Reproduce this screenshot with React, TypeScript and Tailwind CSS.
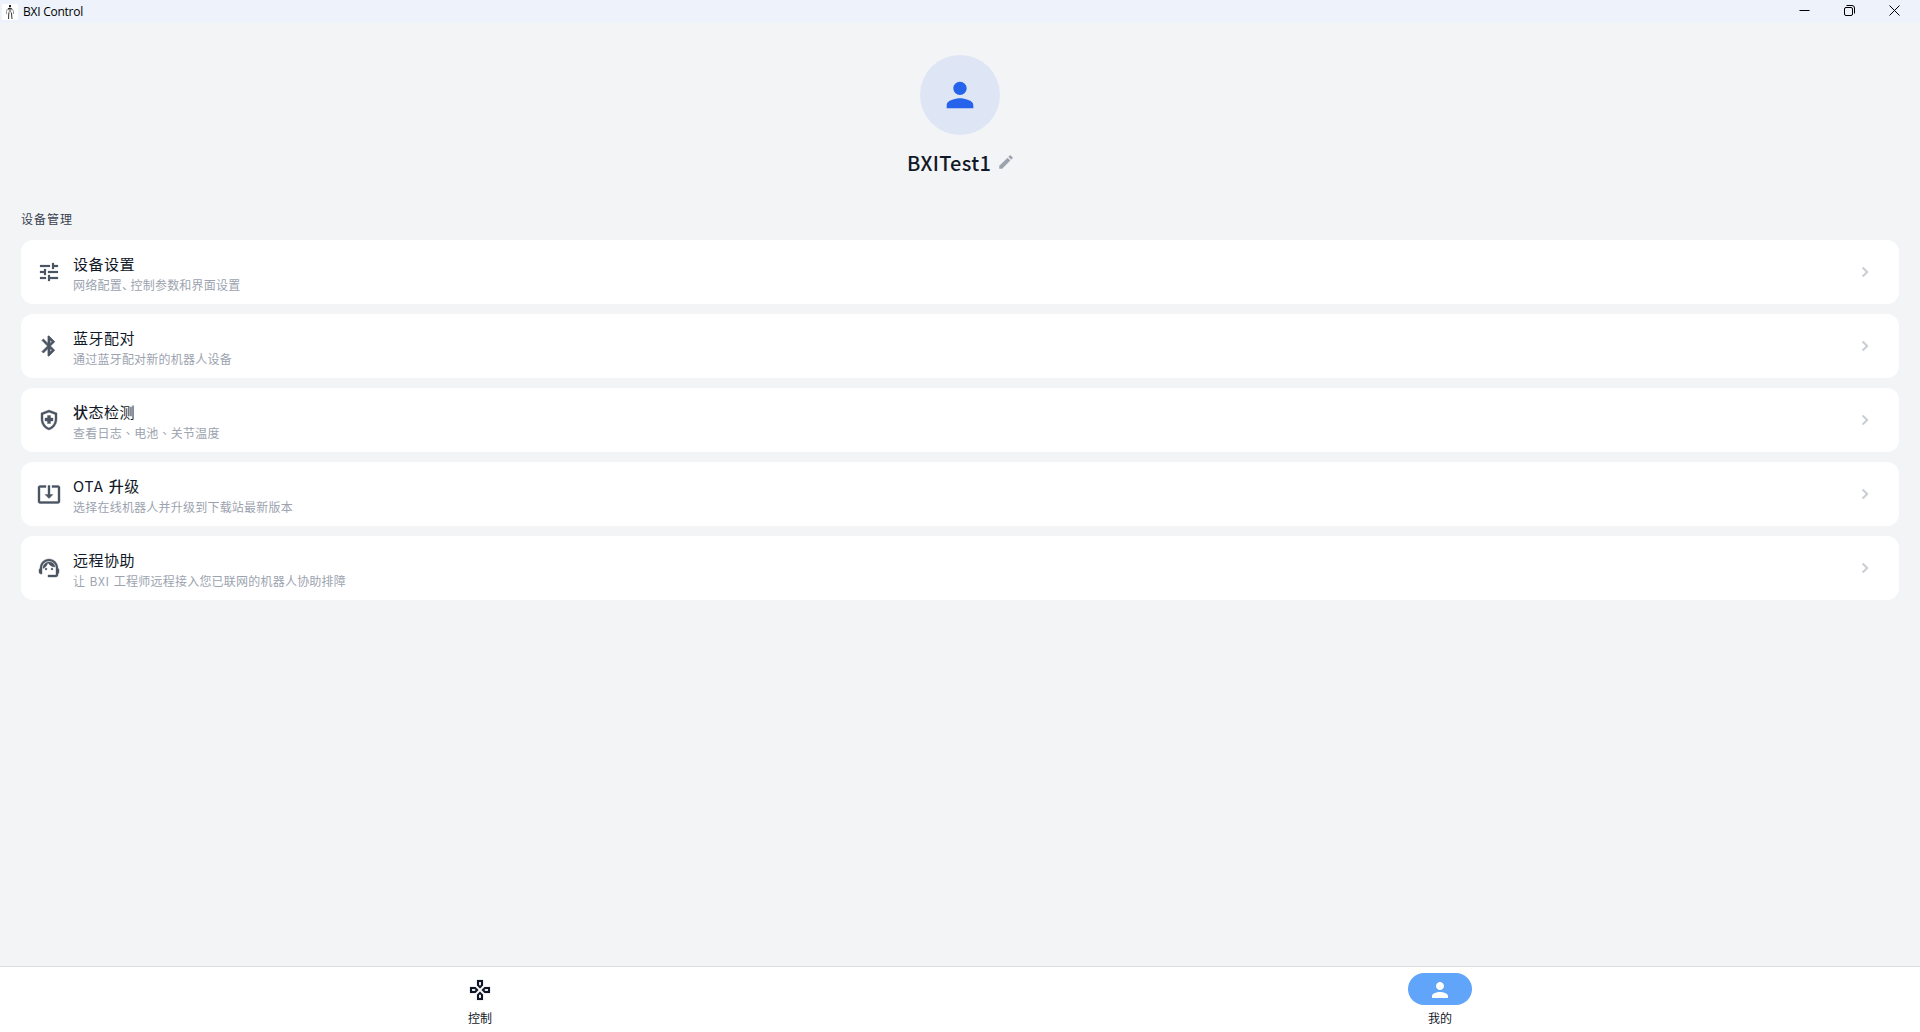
import type { ReactNode } from "react";
import type { IconType } from "react-icons";
import {
  MdBluetooth,
  MdChevronRight,
  MdOutlineGamepad,
  MdOutlineHealthAndSafety,
  MdPerson,
  MdSupportAgent,
  MdSystemUpdateAlt,
  MdTune,
} from "react-icons/md";
import clsx from "clsx";

interface MenuItem {
  icon: IconType;
  iconStroke?: number;
  title: ReactNode;
  subtitle: ReactNode;
}

const MENU_ITEMS: MenuItem[] = [
  {
    icon: MdTune,
    iconStroke: 0.2,
    title: "设备设置",
    subtitle: (
      <>
        网络配置<span className="inline-block w-[8.6px]">、</span>控制参数和界面设置
      </>
    ),
  },
  {
    icon: MdBluetooth,
    iconStroke: 0.8,
    title: "蓝牙配对",
    subtitle: "通过蓝牙配对新的机器人设备",
  },
  {
    icon: MdOutlineHealthAndSafety,
    title: (
      <>
        <span className="font-medium">状</span>态检测
      </>
    ),
    subtitle: (
      <>
        查看日志<CenteredComma />电池<CenteredComma />关节温度
      </>
    ),
  },
  {
    icon: MdSystemUpdateAlt,
    title: (
      <>
        <span className="tracking-[0.8px] [word-spacing:1px]">OTA </span>
        <span className="font-medium">升</span>级
      </>
    ),
    subtitle: "选择在线机器人并升级到下载站最新版本",
  },
  {
    icon: MdSupportAgent,
    title: "远程协助",
    subtitle: (
      <>
        让<span className="tracking-[0.6px] [word-spacing:1px]"> BXI </span>
        工程师远程接入您已联网的机器人协助排障
      </>
    ),
  },
];

export default function App() {
  return (
    <div
      lang="zh-CN"
      className="flex h-screen flex-col overflow-hidden bg-[#f3f4f6] font-['Noto_Sans_CJK_SC',sans-serif] text-[#111827]"
    >
      <TitleBar />
      <main className="flex-1 px-[21px] pt-8">
        <Profile />
        <h2 className="mt-8 text-xs leading-[18px] tracking-[1px] text-[#374151]">
          设备管理
        </h2>
        <div className="mt-3 flex flex-col gap-2.5">
          {MENU_ITEMS.map((item, i) => (
            <MenuCard key={i} {...item} />
          ))}
        </div>
      </main>
      <nav className="flex h-[66px] shrink-0 border-t border-[#dcdddf] bg-white">
        <NavTab icon={MdOutlineGamepad} label="控制" />
        <NavTab icon={MdPerson} label="我的" active />
      </nav>
    </div>
  );
}

/* ── Sub-components ─────────────────────────────────────────────────────── */

function TitleBar() {
  return (
    <header className="flex h-[23px] shrink-0 items-center justify-between bg-[#eef3fb] pl-0.5 text-black">
      <div className="flex items-center">
        <RobotLogo />
        <span className="ml-[5px] font-['Open_Sans',sans-serif] text-[12px] leading-4 tracking-[-0.25px]">
          BXI Control
        </span>
      </div>
      <div className="flex h-5 items-center gap-[34px] pr-5 pb-0.5">
        <svg className="h-[11px] w-[11px]" viewBox="0 0 11 11" fill="none" stroke="currentColor">
          <path d="M0.5 5.5h10" />
        </svg>
        <svg className="h-[11px] w-[11px]" viewBox="0 0 11 11" fill="none" stroke="currentColor">
          <rect x="0.5" y="2.5" width="8" height="8" rx="1.5" />
          <path d="M2.5 0.5h5.5a2.5 2.5 0 0 1 2.5 2.5v5.5" />
        </svg>
        <svg className="h-[11px] w-[11px]" viewBox="0 0 11 11" fill="none" stroke="currentColor">
          <path d="M0.5 0.5l10 10M10.5 0.5l-10 10" />
        </svg>
      </div>
    </header>
  );
}

function RobotLogo() {
  return (
    <svg className="h-4 w-4 bg-white" viewBox="0 0 16 16" fill="none">
      <path d="M7 1h2v2.2H7z" fill="#222" />
      <path d="M6 4h3.8v1.6H6z" fill="#333" />
      <path d="M6.8 5.6h2.4v2.8H6.8z" fill="#999" />
      <path d="M5.4 4.8 4.5 7.5v2.5M10.4 4.8l1.1 2.7v2.5" stroke="#8a8a8a" strokeWidth="0.9" />
      <path d="M6.8 8.5 6.5 15M9.4 8.5l.6 6.5" stroke="#444" strokeWidth="1.1" />
    </svg>
  );
}

function Profile() {
  return (
    <section className="flex flex-col items-center">
      <div className="flex size-20 items-center justify-center rounded-full bg-[#dee5f5]">
        <MdPerson className="size-10 text-[#2563eb]" />
      </div>
      <div className="mt-[13px] flex items-center gap-1.5 pl-0.5">
        <h1 className="text-xl leading-[30px] font-medium tracking-[0.3px]">BXITest1</h1>
        <svg className="mb-0.5 size-[18px] text-[#9ca3af]" viewBox="0 0 24 24" fill="currentColor">
          <path d="M3 17.46v3.04c0 .28.22.5.5.5h3.04c.13 0 .26-.05.35-.15L17.81 9.94l-3.75-3.75L3.15 17.1c-.1.1-.15.22-.15.36zM20.71 7.04a.996.996 0 0 0 0-1.41l-2.34-2.34a.996.996 0 0 0-1.41 0l-1.83 1.83 3.75 3.75 1.83-1.83z" />
        </svg>
      </div>
    </section>
  );
}

// The icon set ships an invisible bounding path (fill="none"), which must stay unstroked
function MenuCard({ icon: Icon, iconStroke = 0.4, title, subtitle }: MenuItem) {
  return (
    <div className="flex h-16 items-center rounded-xl bg-white pr-6 pl-4">
      <Icon
        className="size-6 text-[#4b5563] [&_[fill=none]]:stroke-none"
        strokeWidth={iconStroke}
        strokeLinejoin="round"
      />
      <div className="ml-3 flex-1 pt-[3px]">
        <p className="text-[15px] leading-[22px] tracking-[0.5px]">{title}</p>
        <p className="text-xs leading-[19px] tracking-[0.22px] text-[#9ca3af]">{subtitle}</p>
      </div>
      <MdChevronRight
        className="size-5 text-[#c8ccd3] [&_[fill=none]]:stroke-none"
        strokeWidth="0.6"
      />
    </div>
  );
}

// Enumeration comma placed in the middle of its cell
function CenteredComma() {
  return <span className="font-['Noto_Sans_CJK_TC',sans-serif]" lang="zh-TW">、</span>;
}

function NavTab({
  icon: Icon,
  label,
  active = false,
}: {
  icon: IconType;
  label: string;
  active?: boolean;
}) {
  return (
    <div className="flex flex-1 flex-col items-center pt-1.5">
      <span
        className={clsx(
          "flex h-8 w-16 items-center justify-center rounded-full pt-px",
          active && "bg-[#60a5fa] text-white",
        )}
      >
        <Icon
          className="size-6 [&_[fill=none]]:stroke-none"
          strokeWidth={active ? 0 : 0.15}
        />
      </span>
      <span className="mt-1 text-xs leading-[18px]">{label}</span>
    </div>
  );
}
